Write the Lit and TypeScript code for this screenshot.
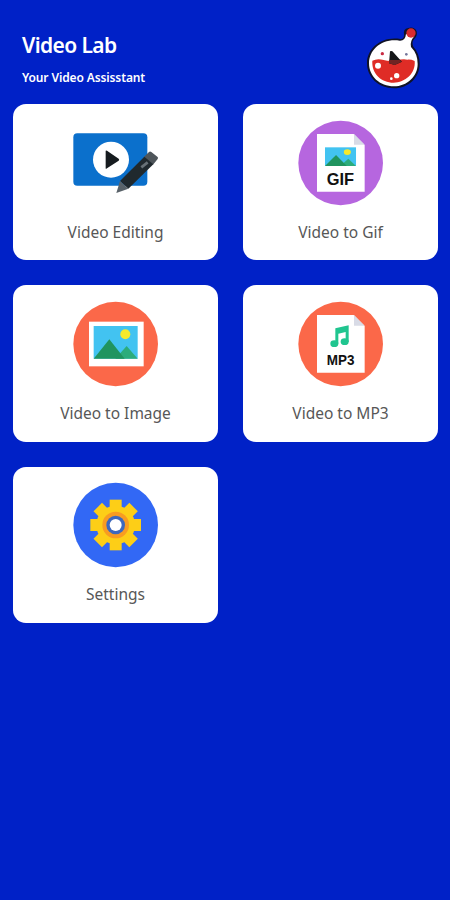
import { LitElement, html, svg, css } from "lit";
import { customElement } from "lit/decorators.js";

const scenery = svg`
  <rect width="132" height="98" fill="#42c3f1"/>
  <circle cx="95" cy="25" r="15" fill="#f6e92b"/>
  <path d="M65 98 L99 60 L132 98Z" fill="#2cac7b"/>
  <path d="M0 98 L47 40 L93 98Z" fill="#20945f"/>`;

const page = svg`
  <path d="M80 63 H190 L223 96 V236 H80Z" fill="#fff"/>
  <path d="M191 63 L223 95 H191Z" fill="#d8dbe6"/>`;

const icons = {
  edit: svg`
    <rect x="24" y="64" width="222" height="157" rx="12" fill="#0b70cc"/>
    <circle cx="137" cy="143" r="54" fill="#fff"/>
    <path d="M121 117 V169 Q121 172 125 169 L160 146 Q163 143 160 140 L125 116 Q121 114 121 117Z" fill="#161b1f"/>
    <path d="M235 136 L251 120 Q254 117 258 120 L276 134 Q280 137 277 141 L263 158Z" fill="#4e555a"/>
    <path d="M164 207 L237 134 L264 157 L189 230Z" fill="#20292e"/>
    <path d="M164 207 L189 230 L153 243Z" fill="#596269"/>
    <path d="M228 166 L247 151" stroke="#687177" stroke-width="8"/>`,
  gif: svg`
    <circle cx="151" cy="150" r="127" fill="#b666df"/>
    ${page}
    <g transform="translate(104 103) scale(.705 .57)">${scenery}</g>
    <text x="150" y="215" class="tag" font-size="49" textLength="82" lengthAdjust="spacingAndGlyphs">GIF</text>`,
  image: svg`
    <circle cx="151" cy="150" r="127" fill="#fb6849"/>
    <rect x="71" y="83" width="164" height="134" fill="#fff"/>
    <g transform="translate(85 96)">${scenery}</g>`,
  mp3: svg`
    <circle cx="151" cy="150" r="127" fill="#fb6849"/>
    ${page}
    <path d="M135 103 L175 94 V144 H166 V114 L144 119 V149 H135Z" fill="#20c58f"/>
    <ellipse cx="132" cy="149" rx="12" ry="10" fill="#20c58f"/>
    <ellipse cx="163" cy="143" rx="12" ry="10" fill="#20c58f"/>
    <text x="151" y="213" class="tag" font-size="43" textLength="83" lengthAdjust="spacingAndGlyphs">MP3</text>`,
  settings: svg`
    <circle cx="151" cy="150" r="127" fill="#3268f5"/>
    <g fill="#fdce17">
      <circle cx="151" cy="150" r="58"/>
      ${[0, 45, 90, 135].map(
        (a) => svg`<rect x="133" y="74" width="36" height="152" transform="rotate(${a} 151 150)"/>`
      )}
    </g>
    <circle cx="151" cy="150" r="40" fill="#f89c21"/>
    <circle cx="151" cy="150" r="28" fill="#3d68bd"/>
    <circle cx="151" cy="150" r="18" fill="#fff"/>`,
};

const tools: { icon: keyof typeof icons; label: string; view: string }[] = [
  { icon: "edit", label: "Video Editing", view: "-13 3 330 300" },
  { icon: "gif", label: "Video to Gif", view: "2 0 300 300" },
  { icon: "image", label: "Video to Image", view: "2 0 300 300" },
  { icon: "mp3", label: "Video to MP3", view: "2 0 300 300" },
  { icon: "settings", label: "Settings", view: "2 0 300 300" },
];

@customElement("app-root")
export class AppRoot extends LitElement {
  static styles = css`
    :host {
      display: block;
      box-sizing: border-box;
      height: 900px;
      background: #0021c7;
      font-family: "Noto Sans", sans-serif;
    }
    .header {
      display: flex;
      justify-content: space-between;
      box-sizing: border-box;
      height: 104px;
      padding: 20px 15px 0 22px;
      color: #fff;
    }
    .title {
      margin: 10px 0 0;
      font-size: 21px;
      line-height: 30px;
      font-weight: 600;
      letter-spacing: -0.6px;
      white-space: nowrap;
    }
    .subtitle {
      margin: 9px 0 0;
      font-size: 12px;
      line-height: 18px;
      font-weight: 600;
      letter-spacing: -0.12px;
      white-space: nowrap;
    }
    .logo {
      width: 80px;
      height: 80px;
    }
    .grid {
      display: grid;
      grid-template-columns: 205px 195px;
      grid-auto-rows: 156.25px;
      gap: 25px;
      padding-left: 13px;
    }
    .card {
      display: flex;
      flex-direction: column;
      align-items: center;
      box-sizing: border-box;
      padding-top: 8.75px;
      border-radius: 13px;
      background: #fff;
    }
    .icon {
      width: 100px;
      height: 100px;
    }
    .edit {
      width: 110px;
    }
    .label {
      margin-top: 7px;
      font-size: 15.5px;
      line-height: 24px;
      color: #575757;
      white-space: nowrap;
    }
    .tag {
      font-family: "Liberation Sans", Arial, sans-serif;
      font-weight: 700;
      text-anchor: middle;
      fill: #111;
    }
  `;

  render() {
    return html`
      <header class="header">
        <div>
          <h1 class="title">Video Lab</h1>
          <p class="subtitle">Your Video Assisstant</p>
        </div>
        <svg class="logo" viewBox="0 0 240 240">
          <path
            d="M136 57 Q147 58 147 45 Q143 27 160 24 Q177 19 185 34 Q188 48 177 58 Q169 66 175 80 Q194 100 194 132 C194 172 161 205 117 205 C70 205 36 171 36 130 C36 84 80 48 136 57Z"
            fill="#101326"
          />
          <path
            d="M134 62 Q151 63 153 42 L178 49 Q164 64 168 81 Q188 101 188 132 C188 169 156 199 117 199 C74 199 42 169 42 130 C42 88 82 54 134 62Z"
            fill="#fff"
          />
          <circle cx="168" cy="39" r="14" fill="#d92b2e" />
          <path d="M52 122 Q67 114 86 120 T125 121 T157 119 Q168 118 179 123 C183 160 150 188 116 188 C79 188 49 160 52 122Z" fill="#df2c26" />
          <path d="M105 94 Q111 91 115 97 L133 117 L141 125 L119 135 L102 130Z" fill="#151719" />
          <path d="M102 120 H134 L140 125 L119 135 L102 130Z" fill="#712423" />
          <circle cx="82" cy="101" r="5" fill="#c92b43" />
          <circle cx="154" cy="103" r="4" fill="#75779b" />
          <circle cx="69" cy="137" r="9" fill="#fff" />
          <circle cx="125" cy="167" r="8" fill="#fff" />
          <circle cx="109" cy="176" r="4" fill="#fff" />
        </svg>
      </header>
      <main class="grid">
        ${tools.map(
          (t) => html`
            <section class="card">
              <svg class="icon ${t.icon}" viewBox=${t.view}>${icons[t.icon]}</svg>
              <span class="label">${t.label}</span>
            </section>
          `
        )}
      </main>
    `;
  }
}
